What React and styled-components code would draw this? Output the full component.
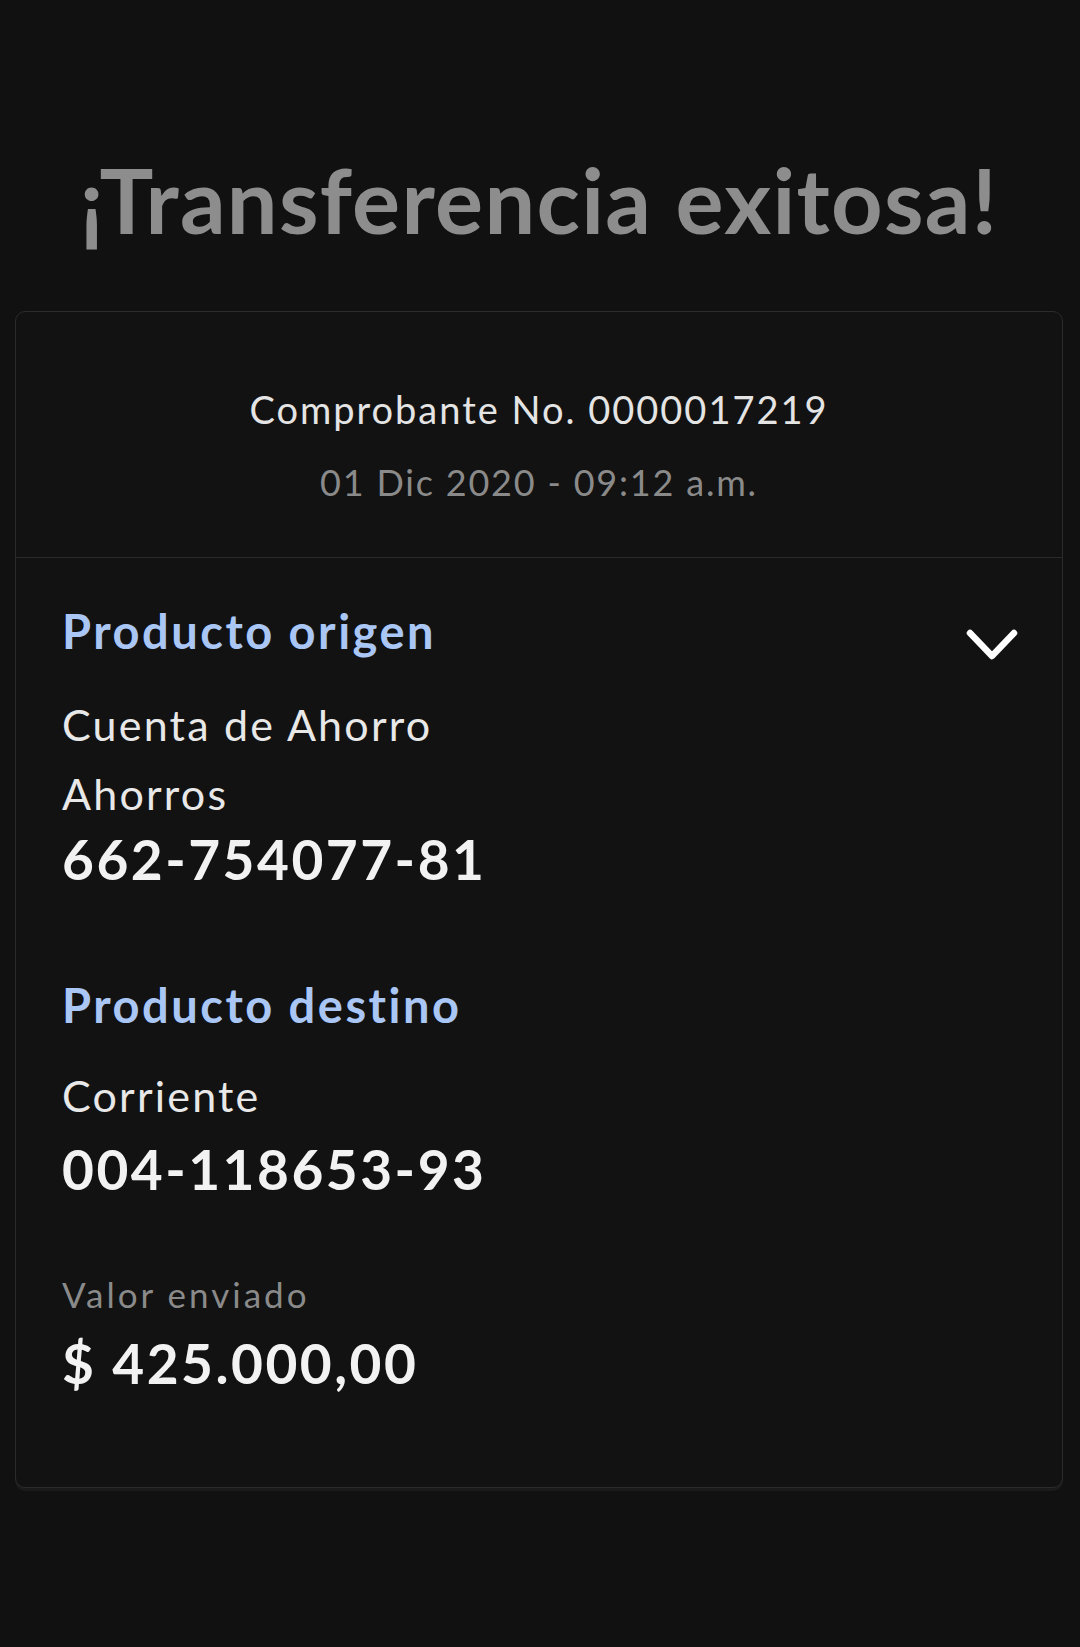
import React from 'react'
import styled, { createGlobalStyle } from 'styled-components'

const GlobalStyle = createGlobalStyle`
  html, body {
    margin: 0;
    padding: 0;
    background: #111111;
  }
  body {
    font-family: Lato, "Open Sans", "Noto Sans", sans-serif;
    -webkit-font-smoothing: antialiased;
  }
`

const Page = styled.div`
  min-height: 1647px;
  background: #111111;
  padding: 144px 17px 0 15px;
  box-sizing: border-box;
`

const Title = styled.h1`
  margin: 0 0 57px;
  text-align: center;
  font-size: 90px;
  line-height: 110px;
  font-weight: 700;
  letter-spacing: 1.3px;
  color: #8d8d8d;
`

const Card = styled.section`
  background: #121212;
  border: 1.5px solid #2b2b2b;
  border-radius: 10px;
  box-shadow: 0 3px 0 #1b1b1b;
`

const Header = styled.div`
  padding: 73px 0 51px;
  border-bottom: 1.5px solid #2a2a2a;
  text-align: center;
`

const Receipt = styled.div`
  font-size: 38px;
  line-height: 48px;
  letter-spacing: 2px;
  color: #e4e4e4;
`

const Stamp = styled.div`
  margin-top: 25px;
  font-size: 36px;
  line-height: 48px;
  letter-spacing: 1.8px;
  color: #8a8a8a;
`

const Body = styled.div`
  padding: 45px 44px 94px 46px;
`

const SectionRow = styled.div`
  display: flex;
  justify-content: space-between;
  align-items: flex-start;
  margin-top: ${p => p.$top || 0}px;
`

const Heading = styled.h2`
  margin: 0;
  font-size: 47px;
  line-height: 56px;
  font-weight: 700;
  letter-spacing: 2.5px;
  color: #a9c6f5;
`

const Toggle = styled.button`
  margin-top: 25px;
  padding: 0;
  border: 0;
  background: none;
  width: 52px;
  height: 34px;
  cursor: pointer;
  svg {
    display: block;
  }
`

const Line = styled.div`
  margin-top: ${p => p.$top || 0}px;
  font-size: ${p => (p.$small ? 35 : 43)}px;
  line-height: 48px;
  letter-spacing: ${p => (p.$small ? 3 : 2.2)}px;
  color: ${p => (p.$small ? '#8a8a8a' : '#e8e8e8')};
`

const Number = styled.div`
  margin-top: ${p => p.$top || 0}px;
  font-size: 55px;
  line-height: 60px;
  font-weight: 700;
  letter-spacing: 2.5px;
  color: #f2f2f2;
`

function Chevron() {
  return (
    <svg width="52" height="34" viewBox="0 0 52 34">
      <polyline
        points="4,5 26,28 48,5"
        fill="none"
        stroke="#ffffff"
        strokeWidth="6.5"
        strokeLinecap="round"
        strokeLinejoin="round"
      />
    </svg>
  )
}

export default function App() {
  return (
    <>
      <GlobalStyle />
      <Page>
        <Title>¡Transferencia exitosa!</Title>
        <Card>
          <Header>
            <Receipt>Comprobante No. 0000017219</Receipt>
            <Stamp>01 Dic 2020 - 09:12 a.m.</Stamp>
          </Header>
          <Body>
            <SectionRow>
              <Heading>Producto origen</Heading>
              <Toggle aria-label="Ver detalle">
                <Chevron />
              </Toggle>
            </SectionRow>
            <Line $top={39}>Cuenta de Ahorro</Line>
            <Line $top={21}>Ahorros</Line>
            <Number $top={11}>662-754077-81</Number>

            <SectionRow $top={88}>
              <Heading>Producto destino</Heading>
            </SectionRow>
            <Line $top={39}>Corriente</Line>
            <Number $top={19}>004-118653-93</Number>

            <Line $top={71} $small>Valor enviado</Line>
            <Number $top={15}>$ 425.000,00</Number>
          </Body>
        </Card>
      </Page>
    </>
  )
}
